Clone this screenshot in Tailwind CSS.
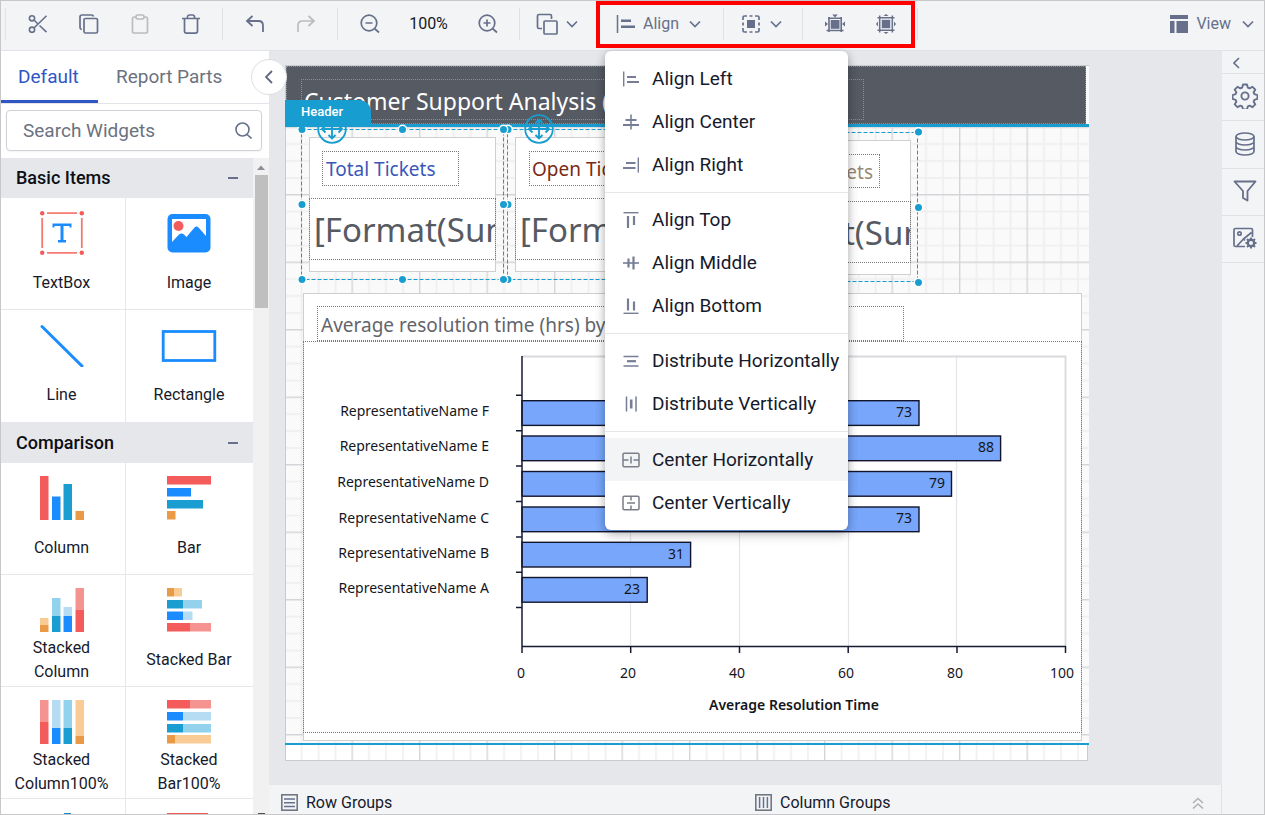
<!DOCTYPE html>
<html lang="en">
<head>
<meta charset="utf-8">
<title>Report Designer</title>
<meta name="viewport" content="width=device-width, initial-scale=1">
<script src="https://cdn.jsdelivr.net/npm/@tailwindcss/browser@4"></script>
</head>
<body class="flex h-screen flex-col overflow-hidden border border-[#c8c8cb] bg-[#e5e7eb] font-[Roboto,sans-serif] text-base text-[#161a2b]">

<!-- shared icon shapes -->
<svg class="hidden" aria-hidden="true">
  <symbol id="chev" viewBox="0 0 12 8"><path d="M1 1.500 6 6.500 11 1.500" fill="none" stroke="currentColor" stroke-width="1.700"/></symbol>
  <symbol id="move" viewBox="0 0 30 30"><circle cx="15" cy="15" r="13.800" fill="none" stroke="currentColor" stroke-width="1.800"/><path d="M15 5.500v19M5 15h20M11.500 9 15 5.500 18.500 9M11.500 21 15 24.500 18.500 21M8.500 11.500 5 15l3.500 3.500M21.500 11.500 25 15l-3.500 3.500" fill="none" stroke="currentColor" stroke-width="1.900"/></symbol>
</svg>

<header class="relative z-30 flex h-[50px] shrink-0 items-center border-b border-[#e0e2e6] bg-[#f3f4f6] pb-[3px] pl-1 text-[#66708b]">
  <div class="flex h-8 items-center border-l border-[#dfe1e5] px-1.5">
    <button class="flex w-[51px] justify-center" aria-label="Cut"><svg class="size-5" viewBox="0 0 20 20" fill="none" stroke="currentColor" stroke-width="1.600"><circle cx="4" cy="4.300" r="2.600"/><circle cx="4" cy="15.700" r="2.600"/><path d="M18.500 1.800 6 14M6 6l3.500 3.500M11.500 11.500l7 6.700"/></svg></button>
    <button class="flex w-[51px] justify-center" aria-label="Copy"><svg class="size-5" viewBox="0 0 20 20" fill="none" stroke="currentColor" stroke-width="1.700"><rect x="5" y="4.500" width="13.500" height="14.500" rx="1.500"/><path d="M2.800 15.500C1.500 15 1 14.500 1 13.500V3c0-1.300.7-2 2-2h9.500c1 0 1.800.5 2 1.500"/></svg></button>
    <button class="flex w-[51px] justify-center text-[#bcbcbc]" aria-label="Paste"><svg class="h-5 w-[18px]" viewBox="0 0 18 20" fill="none" stroke="currentColor" stroke-width="1.700"><rect x="1.500" y="3" width="15" height="16" rx="1.800"/><rect x="5" y="1" width="8" height="4" rx="1.500" fill="#f3f4f6"/></svg></button>
    <button class="flex w-[51px] justify-center" aria-label="Delete"><svg class="h-[22px] w-5" viewBox="0 0 20 22" fill="none" stroke="currentColor" stroke-width="1.700"><path d="M1 5.500h18M3.500 5.500V18c0 1.500.7 2.200 2 2.200h9c1.300 0 2-.7 2-2.200V5.500M6.500 5.500V4c0-1.300.7-2 2-2h3c1.300 0 2 .7 2 2v1.500"/></svg></button>
  </div>
  <div class="flex h-8 items-center border-l border-[#dfe1e5] px-1.5">
    <button class="flex w-[51px] justify-center" aria-label="Undo"><svg class="h-[18px] w-5" viewBox="0 0 20 18" fill="none" stroke="currentColor" stroke-width="1.800"><path d="M7.500 1 2 6l5.500 5M2 6h11.500c3 0 4.500 1.500 4.500 4.500V17"/></svg></button>
    <button class="flex w-[51px] justify-center text-[#bcbcbc]" aria-label="Redo"><svg class="h-[18px] w-5" viewBox="0 0 20 18" fill="none" stroke="currentColor" stroke-width="1.700"><path d="M12.500 1 18 6l-5.500 5M18 6H6.500C3.500 6 2 7.500 2 10.500V17"/></svg></button>
  </div>
  <div class="flex h-8 items-center border-l border-[#dfe1e5] px-1.5">
    <button class="flex w-[51px] justify-center" aria-label="Zoom out"><svg class="size-5" viewBox="0 0 20 20" fill="none" stroke="currentColor" stroke-width="1.700"><circle cx="9" cy="9" r="7.800"/><path d="M5.500 9h7M14.500 14.500l4.500 4"/></svg></button>
    <span class="w-[67px] text-center text-[#16181f]">100%</span>
    <button class="flex w-[51px] justify-center" aria-label="Zoom in"><svg class="size-5" viewBox="0 0 20 20" fill="none" stroke="currentColor" stroke-width="1.700"><circle cx="9" cy="9" r="7.800"/><path d="M5.500 9h7M9 5.500v7M14.500 14.500l4.500 4"/></svg></button>
  </div>
  <div class="flex h-8 w-[78px] items-center border-l border-[#dfe1e5] pl-4">
    <button class="flex items-center gap-2" aria-label="Order"><svg class="size-[22px]" viewBox="0 0 22 22" fill="none" stroke="currentColor" stroke-width="1.700"><rect x="8" y="8" width="13" height="13" rx="1"/><path d="M6 15.500H3c-1 0-1.500-.5-1.500-1.500V3c0-1 .5-1.500 1.500-1.500h11c1 0 1.500.5 1.500 1.500v3"/></svg><svg class="h-2 w-3"><use href="#chev"/></svg></button>
  </div>
  <div class="relative flex h-8 w-[126px] items-center border-l border-[#dfe1e5] pl-[18px]">
    <button class="flex items-center" aria-haspopup="menu" aria-expanded="true"><svg class="mr-2 h-5 w-[19px]" viewBox="0 0 19 20"><path d="M1.500 1v18" stroke="currentColor" stroke-width="1.500"/><path d="M5 6.800h10M5 12.800h14" stroke="currentColor" stroke-width="2.500"/></svg>Align<svg class="ml-2.5 h-2 w-3"><use href="#chev"/></svg></button>

    <!-- Align menu -->
    <div role="menu" class="absolute top-[43px] left-[7px] w-[243px] rounded-md bg-white text-[19px] leading-[43px] text-[#161a2b] shadow-[0_2px_10px_rgba(0,0,0,0.25),0_6px_12px_rgba(0,0,0,0.12)]">
      <div class="pt-1.5 pb-1.5">
        <button role="menuitem" class="flex w-full items-center gap-3 pl-[17px]"><svg class="size-[18px] text-[#767d95]" viewBox="0 0 18 18" stroke="currentColor"><path d="M1.700 1.500v15" stroke-width="1.400"/><path d="M5 7h9M5 12h12" stroke-width="2.200"/></svg>Align Left</button>
        <button role="menuitem" class="flex w-full items-center gap-3 pl-[17px]"><svg class="size-[18px] text-[#767d95]" viewBox="0 0 18 18" stroke="currentColor"><path d="M9 1.500v15" stroke-width="1.600"/><path d="M3.500 7h11M1 12h16" stroke-width="2.200"/></svg>Align Center</button>
        <button role="menuitem" class="flex w-full items-center gap-3 pl-[17px]"><svg class="size-[18px] text-[#767d95]" viewBox="0 0 18 18" stroke="currentColor"><path d="M16.300 1.500v15" stroke-width="1.400"/><path d="M4 7h9.500M1 12h12.500" stroke-width="2.200"/></svg>Align Right</button>
      </div>
      <div class="border-t border-[#e5e7eb] pt-[5px] pb-1.5">
        <button role="menuitem" class="flex w-full items-center gap-3 pl-[17px]"><svg class="size-[18px] text-[#767d95]" viewBox="0 0 18 18" stroke="currentColor"><path d="M1.500 1.700h15" stroke-width="1.400"/><path d="M6 5v12M12 5v9" stroke-width="2.200"/></svg>Align Top</button>
        <button role="menuitem" class="flex w-full items-center gap-3 pl-[17px]"><svg class="size-[18px] text-[#767d95]" viewBox="0 0 18 18" stroke="currentColor"><path d="M1 9h16" stroke-width="1.600"/><path d="M6.500 4.500v9M11.500 2.500v13" stroke-width="2.200"/></svg>Align Middle</button>
        <button role="menuitem" class="flex w-full items-center gap-3 pl-[17px]"><svg class="size-[18px] text-[#767d95]" viewBox="0 0 18 18" stroke="currentColor"><path d="M1.500 16.300h15" stroke-width="1.400"/><path d="M6 1.500v12M12 4.500v9" stroke-width="2.200"/></svg>Align Bottom</button>
      </div>
      <div class="border-t border-[#e5e7eb] pt-[5px] pb-1.5">
        <button role="menuitem" class="flex w-full items-center gap-3 pl-[17px]"><svg class="size-[18px] text-[#767d95]" viewBox="0 0 18 18" stroke="currentColor"><path d="M1.500 4.500h15M1.500 14h15" stroke-width="1.600"/><path d="M5 9.200h9" stroke-width="2.200"/></svg>Distribute Horizontally</button>
        <button role="menuitem" class="flex w-full items-center gap-3 pl-[17px]"><svg class="size-[18px] text-[#767d95]" viewBox="0 0 18 18" stroke="currentColor"><path d="M4.500 1.500v15M14 1.500v15" stroke-width="1.500"/><path d="M9.200 4.500v9" stroke-width="2.600"/></svg>Distribute Vertically</button>
      </div>
      <div class="border-t border-[#e5e7eb] pt-1.5 pb-1.5">
        <button role="menuitem" class="flex w-full items-center gap-3 bg-[#f3f4f6] pl-[17px]"><svg class="size-[18px] text-[#7b7e88]" viewBox="0 0 18 18" fill="none" stroke="currentColor" stroke-width="1.500"><rect x="1" y="2.200" width="16" height="13.500" rx="1.200"/><path d="M1 9h5.500M11.500 9H17M9 5.500v7"/></svg>Center Horizontally</button>
        <button role="menuitem" class="flex w-full items-center gap-3 pl-[17px]"><svg class="size-[18px] text-[#7b7e88]" viewBox="0 0 18 18" fill="none" stroke="currentColor" stroke-width="1.500"><rect x="1" y="2.200" width="16" height="13.500" rx="1.200"/><path d="M9 2.500v4M9 11.500v4M5 9h8"/></svg>Center Vertically</button>
      </div>
    </div>
  </div>
  <div class="flex h-8 w-[79px] items-center border-l border-[#dfe1e5] pl-[18px]">
    <button class="flex items-center gap-2.5" aria-label="Size"><svg class="size-[18px]" viewBox="0 0 18 18" fill="none" stroke="currentColor" stroke-width="1.700"><rect x="5" y="5" width="8" height="8" fill="currentColor" stroke="none"/><path d="M1 5V2.500C1 1.500 1.500 1 2.500 1H5M13 1h2.500c1 0 1.500.5 1.500 1.500V5M17 13v2.500c0 1-.5 1.500-1.500 1.500H13M5 17H2.500C1.500 17 1 16.500 1 15.500V13M7.500 1h3M7.500 17h3M1 7.500v3M17 7.500v3"/></svg><svg class="h-2 w-3"><use href="#chev"/></svg></button>
  </div>
  <div class="flex h-8 items-center border-x border-[#dfe1e5] px-1.5">
    <button class="flex w-[51px] justify-center" aria-label="Fit contents"><svg class="size-5" viewBox="0 0 20 20" fill="none" stroke="currentColor" stroke-width="1.600"><rect x="5.700" y="6" width="8.800" height="8.800" fill="currentColor" stroke="none"/><path d="M4 3v15M16.200 3v15M1.500 16.500h17M3 4.200h14"/><path d="M7.200 .5h5.600l-2.800 3zM0 7.500v5l3-2.500zM20 7.500v5l-3-2.500z" fill="currentColor" stroke="none"/></svg></button>
    <button class="flex w-[51px] justify-center" aria-label="Fit to frame"><svg class="size-5" viewBox="0 0 20 20" fill="none" stroke="currentColor" stroke-width="1.500"><rect x="5.800" y="5.800" width="8.400" height="8.400" fill="currentColor" stroke="none"/><path d="M3.700 1.500v17M16.300 1.500v17M1.500 3.700h17M1.500 16.300h17"/><path d="M7.500 2h5L10 0zM7.500 18h5L10 20zM2 7.500v5L0 10zM18 7.500v5l2-2.500z" fill="currentColor" stroke="none"/></svg></button>
  </div>
  <button class="mr-[10px] ml-auto flex items-center"><svg class="mr-2 size-[18px]" viewBox="0 0 18 18" fill="currentColor"><path d="M0 0h18v4H0zM0 6h4.500v12H0zM6.500 6H18v12H6.500z"/></svg>View<svg class="ml-[11px] h-2 w-3"><use href="#chev"/></svg></button>
  <!-- highlighted tool range -->
  <div class="pointer-events-none absolute top-0 left-[595px] h-[47px] w-[319px] border-4 border-[#ff0000]"></div>
</header>

<div class="flex min-h-0 flex-1">
  <!-- widget panel -->
  <aside class="relative z-20 flex w-[268px] shrink-0 flex-col bg-white">
    <nav class="flex h-[53px] shrink-0 border-b border-[#e2e4e9] text-[19px] leading-[52px]">
      <a href="#" class="h-[52px] w-[97px] border-b-3 border-[#3056c4] pl-[17px] text-[#3056c4]">Default</a>
      <a href="#" class="pl-[18px] text-[#6b7280]">Report Parts</a>
    </nav>
    <button class="absolute top-2 left-[250px] flex size-9 items-center justify-center rounded-full border border-[#dcdee3] bg-white text-[#5f6880]" aria-label="Collapse panel"><svg class="h-[14px] w-2" viewBox="0 0 8 14" fill="none" stroke="currentColor" stroke-width="1.800"><path d="M7 1 1 7l6 6"/></svg></button>
    <div class="mt-1.5 mr-[7px] mb-[7px] ml-[5px] flex h-[41px] shrink-0 items-center rounded border border-[#cfd1d6] pr-[9px] pl-4 shadow-xs">
      <input aria-label="Search Widgets" placeholder="Search Widgets" class="min-w-0 flex-1 bg-transparent pt-0.5 text-[19px] outline-none placeholder:text-[#6b7280]">
      <svg class="size-[17px] text-[#66708b]" viewBox="0 0 17 17" fill="none" stroke="currentColor" stroke-width="1.600"><circle cx="7.500" cy="7.500" r="6.500"/><path d="M12 12.500l4.500 4"/></svg>
    </div>
    <div class="flex min-h-0 flex-1">
      <div class="flex-1 overflow-hidden">
        <h2 class="flex h-10 items-center justify-between bg-[#e5e7eb] pr-[15px] pb-px pl-[15px] text-[18px] font-medium text-[#0c0e14]">Basic Items<span class="h-[2px] w-2.5 bg-[#66708b]"></span></h2>
        <div class="grid grid-cols-[125px_1fr] text-center">
          <button class="flex h-[112px] flex-col items-center border-r border-b border-[#e5e7eb] pt-[13px] pr-[3px]"><svg class="size-11 shrink-0" viewBox="0 0 44 44"><g fill="#f45b5b"><circle cx="2.200" cy="2.200" r="2.200"/><circle cx="41.800" cy="2.200" r="2.200"/><circle cx="2.200" cy="41.800" r="2.200"/><circle cx="41.800" cy="41.800" r="2.200"/></g><path d="M7 2.200h30M7 41.800h30M2.200 7v30M41.800 7v30" stroke="#f47a72" stroke-width="1.800"/><path d="M12.500 12.500h19v4h-2v-1.500h-6v14h2.500v2.500h-8V29h2.500V15h-6v1.500h-2z" fill="#1a8cff"/></svg><span class="mt-1 flex h-12 items-center leading-6">TextBox</span></button>
          <button class="flex h-[112px] flex-col items-center border-b border-[#e5e7eb] pt-[13px] pr-px"><svg class="size-11 shrink-0" viewBox="0 0 44 44"><rect x=".5" y="3" width="43" height="38.500" rx="5" fill="#1a8cff"/><path d="M5 8h34v17l-7.500-8.500c-1-1.200-3-1.200-4 0l-8 9.500-2.500-2.500c-1.500-1.500-3.500-1.500-5 0L5 31z" fill="#fff"/><circle cx="11.500" cy="15" r="5" fill="#f45b5b"/></svg><span class="mt-1 flex h-12 items-center leading-6">Image</span></button>
          <button class="flex h-[112px] flex-col items-center border-r border-[#e5e7eb] pt-[13px] pr-[3px]"><svg class="size-11 shrink-0" viewBox="0 0 44 44"><path d="M2 3.500 42 43" stroke="#1a8cff" stroke-width="3" stroke-linecap="round"/></svg><span class="mt-1 flex h-12 items-center leading-6">Line</span></button>
          <button class="flex h-[112px] flex-col items-center pt-[13px] pr-px"><svg class="h-11 w-[56px] shrink-0" viewBox="0 0 56 44"><rect x="2.200" y="8.500" width="51.600" height="29" fill="none" stroke="#1a8cff" stroke-width="2.800"/></svg><span class="mt-1 flex h-12 items-center leading-6">Rectangle</span></button>
        </div>
        <h2 class="flex h-[41px] items-center justify-between bg-[#e5e7eb] pr-[15px] pl-[15px] text-[18px] font-medium text-[#0c0e14]">Comparison<span class="h-[2px] w-2.5 bg-[#66708b]"></span></h2>
        <div class="grid grid-cols-[125px_1fr] text-center">
          <button class="flex h-[112px] flex-col items-center border-r border-b border-[#e5e7eb] pt-[13px] pr-[3px]"><svg class="size-11 shrink-0" viewBox="0 0 44 44"><path d="M0 0h8.500v44H0z" fill="#f45b5b"/><path d="M12 20.500h8.500V44H12z" fill="#1a8cff"/><path d="M23.500 8H32v36h-8.500z" fill="#1a9dd0"/><path d="M35.500 35H44v9h-8.500z" fill="#ea9a47"/></svg><span class="mt-1 flex h-12 items-center leading-6">Column</span></button>
          <button class="flex h-[112px] flex-col items-center border-b border-[#e5e7eb] pt-[13px] pr-px"><svg class="size-11 shrink-0" viewBox="0 0 44 44"><path d="M0 0h44v8.500H0z" fill="#f45b5b"/><path d="M0 12h24v8.500H0z" fill="#1a8cff"/><path d="M0 24h36v8.500H0z" fill="#1a9dd0"/><path d="M0 35h8.500v8.500H0z" fill="#ea9a47"/></svg><span class="mt-1 flex h-12 items-center leading-6">Bar</span></button>
          <button class="flex h-[112px] flex-col items-center border-r border-b border-[#e5e7eb] pt-[13px] pr-[3px]"><svg class="size-11 shrink-0" viewBox="0 0 44 44"><path d="M0 30h8.500v7H0z" fill="#f9cc96"/><path d="M0 37h8.500v7H0z" fill="#ea9a47"/><path d="M12 10h8.500v18H12z" fill="#93d2ec"/><path d="M12 28h8.500v16H12z" fill="#1a9dd0"/><path d="M23.500 19H32v9h-8.500z" fill="#b5dcf2"/><path d="M23.500 28H32v16h-8.500z" fill="#1a8cff"/><path d="M35.500 0H44v22h-8.500z" fill="#f4938f"/><path d="M35.500 22H44v22h-8.500z" fill="#f45b5b"/></svg><span class="mt-1 flex h-12 items-center leading-6">Stacked<br>Column</span></button>
          <button class="flex h-[112px] flex-col items-center border-b border-[#e5e7eb] pt-[13px] pr-px"><svg class="size-11 shrink-0" viewBox="0 0 44 44"><path d="M0 0h7v8.500H0z" fill="#ea9a47"/><path d="M7 0h8v8.500H7z" fill="#f9cc96"/><path d="M0 12h16v8.500H0z" fill="#1a9dd0"/><path d="M16 12h19v8.500H16z" fill="#93d2ec"/><path d="M0 23.500h16V32H0z" fill="#1a8cff"/><path d="M16 23.500h9.500V32H16z" fill="#b5dcf2"/><path d="M0 35h23v8.500H0z" fill="#f45b5b"/><path d="M23 35h21v8.500H23z" fill="#f4938f"/></svg><span class="mt-1 flex h-12 items-center leading-6">Stacked Bar</span></button>
          <button class="flex h-[112px] flex-col items-center border-r border-b border-[#e5e7eb] pt-[13px] pr-[3px]"><svg class="size-11 shrink-0" viewBox="0 0 44 44"><path d="M0 0h8.500v22H0z" fill="#f4938f"/><path d="M0 22h8.500v22H0z" fill="#f45b5b"/><path d="M12 0h8.500v28H12z" fill="#b5dcf2"/><path d="M12 28h8.500v16H12z" fill="#1a8cff"/><path d="M23.500 0H32v28h-8.500z" fill="#93d2ec"/><path d="M23.500 28H32v16h-8.500z" fill="#1a9dd0"/><path d="M35.500 0H44v36h-8.500z" fill="#f9cc96"/><path d="M35.500 36H44v8h-8.500z" fill="#ea9a47"/></svg><span class="mt-1 flex h-12 items-center leading-6">Stacked<br>Column100%</span></button>
          <button class="flex h-[112px] flex-col items-center border-b border-[#e5e7eb] pt-[13px] pr-px"><svg class="size-11 shrink-0" viewBox="0 0 44 44"><path d="M0 0h23v8.500H0z" fill="#f45b5b"/><path d="M23 0h21v8.500H23z" fill="#f4938f"/><path d="M0 12h16v8.500H0z" fill="#1a8cff"/><path d="M16 12h28v8.500H16z" fill="#b5dcf2"/><path d="M0 24h16v8.500H0z" fill="#1a9dd0"/><path d="M16 24h28v8.500H16z" fill="#93d2ec"/><path d="M0 35h8.500v8.500H0z" fill="#ea9a47"/><path d="M8.500 35H44v8.500H8.500z" fill="#f9cc96"/></svg><span class="mt-1 flex h-12 items-center leading-6">Stacked<br>Bar100%</span></button>
          <div class="flex h-[112px] justify-center border-r border-[#e5e7eb] pt-[14px] pr-[3px]"><svg class="size-11" viewBox="0 0 44 44"><path d="M24 0h7v44h-7z" fill="#1a8cbf"/></svg></div>
          <div class="flex h-[112px] justify-center pt-[14px] pr-px"><svg class="size-11" viewBox="0 0 44 44"><path d="M0 0h41v9H0z" fill="#f45b5b"/></svg></div>
        </div>
      </div>
      <!-- scroll bar -->
      <div class="flex w-4 flex-col items-center bg-[#f1f1f1]">
        <svg class="mt-[7px] h-[5px] w-2" viewBox="0 0 8 5"><path d="M0 5h8L4 .5z" fill="#8a8f99"/></svg>
        <div class="mt-[5px] h-[133px] w-[13px] bg-[#bfbfbf]"></div>
        <span class="mt-auto h-px w-[7px] bg-[#505050]"></span>
      </div>
    </div>
  </aside>

  <main class="flex min-w-0 flex-1 flex-col">
    <div class="relative flex-1 overflow-hidden">
      <!-- report page: free design canvas -->
      <section class="absolute top-[14px] left-4 h-[696px] w-[804px] font-['Noto_Sans',sans-serif]">
        <svg class="absolute inset-0 h-[696px] w-[804px]" viewBox="0 0 804 696">
          <defs>
            <pattern id="grid" width="67.500" height="67.500" patternUnits="userSpaceOnUse" x="-1" y="61.500">
              <path d="M17.500 0v67.500M34.500 0v67.500M51.500 0v67.500M0 17.500h67.500M0 34.500h67.500M0 51.500h67.500" stroke="#efeff1" stroke-width="1.800"/>
              <path d="M.7 0v67.500M0 .7h67.500" stroke="#d4d5d8" stroke-width="1.400"/>
            </pattern>
            <pattern id="gridFoot" width="67.500" height="67.500" patternUnits="userSpaceOnUse" x="-1" y="680">
              <path d="M17.500 0v67.500M34.500 0v67.500M51.500 0v67.500" stroke="#f0f0f2" stroke-width="1.800"/>
              <path d="M.7 0v67.500" stroke="#d4d5d8" stroke-width="1.400"/>
            </pattern>
          </defs>
          <rect width="804" height="696" fill="#fafafa"/>
          <rect y="62" width="804" height="616" fill="url(#grid)"/>
          <rect y="680" width="803" height="15" fill="#fff"/>
          <rect y="680" width="803" height="15" fill="url(#gridFoot)"/>
          <path d="M0 .5h804M0 695.500h803M.5 0v696M802.500 680v16" stroke="#c9cacd" fill="none"/>
          <path d="M803.500 680v16" stroke="#e5e7eb"/>
        </svg>

        <div class="absolute top-px left-px h-[58px] w-[800px] border border-dotted border-[#8b8e94] bg-[#565a63]"></div>
        <div class="absolute top-[14px] left-4 flex h-[41px] w-[563px] items-center border border-dotted border-[#8b8e94] pt-1 pl-[2px] text-[23px] whitespace-nowrap text-white">Customer Support Analysis (</div>
        <div class="absolute top-[59px] left-0 h-[3px] w-[804px] bg-[#189dd0]"></div>

        <!-- total tickets -->
        <article class="absolute top-[72px] left-6 h-[135px] w-[187px] border border-[#cfcfd1] bg-white">
          <h3 class="absolute top-[13px] left-3 flex h-[35px] w-[137px] items-center border border-dotted border-[#777] pt-0.5 pl-[3px] text-[19px] whitespace-nowrap text-[#3a57b8]">Total Tickets</h3>
          <p class="absolute top-[60px] -left-px flex h-[62px] w-[187px] items-center overflow-hidden border border-dotted border-[#777] pt-0.5 pl-1 text-[33px] whitespace-nowrap text-[#565a63]">[Format(Sum</p>
        </article>
        <!-- open tickets -->
        <article class="absolute top-[72px] left-[230px] h-[135px] w-[187px] border border-[#cfcfd1] bg-white">
          <h3 class="absolute top-[13px] left-[13px] flex h-[35px] w-[137px] items-center border border-dotted border-[#777] pt-0.5 pl-[2px] text-[19px] whitespace-nowrap text-[#7c2a15]">Open Tickets</h3>
          <p class="absolute top-[60px] -left-px flex h-[62px] w-[187px] items-center overflow-hidden border border-dotted border-[#777] pt-0.5 pl-1 text-[33px] whitespace-nowrap text-[#565a63]">[Format(Sum</p>
        </article>
        <!-- third ticket card -->
        <article class="absolute top-[75px] left-[442px] h-[135px] w-[184px] border border-[#cfcfd1] bg-white">
          <h3 class="absolute top-[13px] left-[13px] flex h-[34px] w-[139px] items-center justify-end border border-dotted border-[#777] pt-0.5 pr-1.5 text-[19px] whitespace-nowrap text-[#978876]">Tickets</h3>
          <p class="absolute top-[60px] -left-px flex h-[62px] w-[184px] items-center overflow-hidden border border-dotted border-[#777] pt-0.5 pl-1 text-[33px] whitespace-nowrap text-[#565a63]">[Format(Sum</p>
        </article>

        <!-- chart card -->
        <article class="absolute top-[228px] left-[18px] h-[448px] w-[779px] border border-[#cfcfd1] bg-white">
          <h3 class="absolute top-3 left-[13px] flex h-[35px] w-[587px] items-center border border-dotted border-[#777] pt-1 pl-[3px] text-[19px] whitespace-nowrap text-[#62656b]">Average resolution time (hrs) by</h3>
          <div class="absolute top-[47px] -left-px h-[392px] w-[779px] border border-dotted border-[#777]">
            <svg class="h-[390px] w-[777px] text-[14px]" viewBox="304 342 777 390" fill="#14161c" role="img" aria-label="Average Resolution Time">
              <path d="M522 356.500h543.500V646" fill="none" stroke="#d9dadd" stroke-width="1.800"/>
              <path d="M630.500 357v289M739.500 357v289M848.500 357v289M956.500 357v289" stroke="#e4e5e8" stroke-width="1.200"/>
              <g fill="#77a6fb" stroke="#12142c" stroke-width="1.400">
                <rect x="522" y="400.700" width="397" height="24.700"/>
                <rect x="522" y="436" width="478.600" height="24.700"/>
                <rect x="522" y="471.500" width="429.500" height="24.700"/>
                <rect x="522" y="507" width="397" height="24.700"/>
                <rect x="522" y="542.300" width="168.600" height="24.700"/>
                <rect x="522" y="577.500" width="125.200" height="24.700"/>
              </g>
              <path d="M522 356v297M516 395.300h6M516 430.700h6M516 466h6M516 501.500h6M516 537h6M516 572.300h6M516 607.500h6M522 646.500h544M630.700 646v7M739.500 646v7M848.200 646v7M957 646v7M1065.500 646v7" stroke="#171a33" stroke-width="1.500"/>
              <g text-anchor="end">
                <text x="489" y="416">RepresentativeName F</text><text x="489" y="451">RepresentativeName E</text><text x="489" y="487">RepresentativeName D</text><text x="489" y="523">RepresentativeName C</text><text x="489" y="558">RepresentativeName B</text><text x="489" y="593">RepresentativeName A</text>
                <text x="912" y="417">73</text><text x="994" y="452">88</text><text x="945" y="488">79</text><text x="912" y="523">73</text><text x="684" y="559">31</text><text x="640" y="594">23</text>
              </g>
              <g text-anchor="middle">
                <text x="521" y="678">0</text><text x="628" y="678">20</text><text x="737" y="678">40</text><text x="846" y="678">60</text><text x="955" y="678">80</text><text x="1062" y="678">100</text>
                <text x="794" y="710" class="font-semibold">Average Resolution Time</text>
              </g>
            </svg>
          </div>
        </article>
        <div class="absolute top-[678px] left-0 h-[2px] w-[804px] bg-[#189dd0]"></div>

        <!-- selection frames and handles -->
        <svg class="absolute inset-0 h-[696px] w-[804px]" viewBox="285 65 804 696">
          <g fill="none" stroke="#189dd0" stroke-width="1" stroke-dasharray="4 2"><path d="M301.500 129.500h202v150h-202zM507.500 129.500h202v150h-202zM719.500 132.500h198v149h-198z"/></g>
          <g fill="#189dd0" stroke="#fff" stroke-width="1.400">
            <circle cx="508" cy="129.500" r="4.200"/><circle cx="508" cy="204.500" r="4.200"/><circle cx="508" cy="279.500" r="4.200"/>
            <circle cx="302" cy="129.500" r="4.200"/><circle cx="402.500" cy="129.500" r="4.200"/><circle cx="503.500" cy="129.500" r="4.200"/>
            <circle cx="302" cy="204.500" r="4.200"/><circle cx="503.500" cy="204.500" r="4.200"/>
            <circle cx="302" cy="279.500" r="4.200"/><circle cx="402.500" cy="279.500" r="4.200"/><circle cx="503.500" cy="279.500" r="4.200"/>
            <circle cx="918.500" cy="132" r="4.200"/><circle cx="918.500" cy="207.500" r="4.200"/><circle cx="918.500" cy="282.500" r="4.200"/>
          </g>
        </svg>
        <svg class="absolute top-[49px] left-8 size-[30px] text-[#189dd0]"><use href="#move"/></svg>
        <svg class="absolute top-[49px] left-[239px] size-[30px] text-[#189dd0]"><use href="#move"/></svg>
        <div class="absolute top-[35px] left-0 h-[27px] w-[86px] rounded-tr-xl bg-[#189dd0] pl-4 font-[Roboto,sans-serif] text-[13px] leading-6 font-medium text-white">Header</div>
      </section>
    </div>

    <footer class="flex h-[29px] shrink-0 items-center border-r border-[#dfe1e6] bg-[#f3f4f6] pt-[6px]">
      <div class="flex w-1/2 items-center gap-2 pl-3"><svg class="size-[17px]" viewBox="0 0 17 17" fill="none"><rect x=".8" y=".8" width="15.400" height="15.400" stroke="#737783" stroke-width="1.600"/><path d="M3 5h11M3 8.700h11M3 12.400h11" stroke="#66708b" stroke-width="1.500"/></svg>Row Groups</div>
      <div class="flex flex-1 items-center gap-2 pl-[10px]"><svg class="size-[17px]" viewBox="0 0 17 17" fill="none"><rect x=".8" y=".8" width="15.400" height="15.400" stroke="#737783" stroke-width="1.600"/><path d="M4.600 3v11M8.500 3v11M12.400 3v11" stroke="#66708b" stroke-width="1.500"/></svg>Column Groups</div>
      <button class="mr-[17px] text-[#b0b2b7]" aria-label="Expand groups"><svg class="h-3 w-3" viewBox="0 0 12 12" fill="none" stroke="currentColor" stroke-width="1.600"><path d="M1 6l5-4.500L11 6M1 11.500 6 7l5 4.500"/></svg></button>
    </footer>
  </main>

  <!-- property rail -->
  <aside class="flex w-[42px] shrink-0 flex-col bg-[#f3f4f6] text-[#66708b]">
    <button class="flex h-[23px] items-center border-b border-[#dfe1e5] pt-0.5 pl-[11px]" aria-label="Expand panel"><svg class="h-3 w-[7px]" viewBox="0 0 7 12" fill="none" stroke="currentColor" stroke-width="1.600"><path d="M6 1 1 6l5 5"/></svg></button>
    <button class="flex h-[47px] items-center justify-center border-b border-[#dfe1e5] pb-[2px] pl-1" aria-label="Properties"><svg class="size-[26px]" viewBox="0 0 26 26" fill="none" stroke="currentColor" stroke-width="1.900" stroke-linejoin="round"><circle cx="13" cy="13" r="3.600"/><path d="M11 1.500h4l.8 3.100 1.900.8 2.800-1.600 2.800 2.800-1.700 2.800.8 1.800 3.100.9v3.800l-3.100.9-.8 1.800 1.700 2.800-2.800 2.800-2.800-1.600-1.900.8-.8 3.100h-4l-.8-3.100-1.900-.8-2.800 1.600-2.800-2.800 1.700-2.800-.8-1.800-3.100-.9v-3.800l3.100-.9.8-1.800-1.700-2.800 2.800-2.800 2.800 1.600 1.900-.8z"/></svg></button>
    <button class="flex h-12 items-center justify-center border-b border-[#dfe1e5] pb-[2px] pl-1" aria-label="Data"><svg class="h-6 w-5" viewBox="0 0 20 24" fill="none" stroke="currentColor" stroke-width="1.700"><ellipse cx="10" cy="4.500" rx="9" ry="3.500"/><path d="M1 4.500v15c0 2 4 3.500 9 3.500s9-1.500 9-3.500v-15M1 9.500C1 11.500 5 13 10 13s9-1.500 9-3.500M1 14.500C1 16.500 5 18 10 18s9-1.500 9-3.500"/></svg></button>
    <button class="flex h-[47px] items-center justify-center border-b border-[#dfe1e5] pb-[2px] pl-1" aria-label="Parameters"><svg class="h-[22px] w-6" viewBox="0 0 24 22" fill="none" stroke="currentColor" stroke-width="1.800" stroke-linejoin="round"><path d="M1.500 1.500h21L14.500 11v9.500l-4.500-2.500V11z"/></svg></button>
    <button class="flex h-[47px] items-center justify-center border-b border-[#dfe1e5] pb-[2px] pl-1" aria-label="Image manager"><svg class="h-[22px] w-6" viewBox="0 0 24 22" fill="none" stroke="currentColor" stroke-width="1.700"><path d="M12 19.500H2.500C1.500 19.500 1 19 1 18V3c0-1 .5-1.500 1.500-1.500h15.500c1 0 1.500.5 1.500 1.500v7M4 19l6.500-7 1.500 1.500M10.500 12l8-6.500"/><circle cx="6.500" cy="6.500" r="1.700"/><circle cx="18" cy="16" r="3.200" stroke-width="2.400"/><path d="M18 10.500v2M18 19.500v2M12.500 16h2M21.500 16h2M14 12l1.500 1.500M20.500 18.500 22 20M22 12l-1.500 1.500M15.500 18.500 14 20" stroke-width="2"/></svg></button>
  </aside>
</div>
</body>
</html>
